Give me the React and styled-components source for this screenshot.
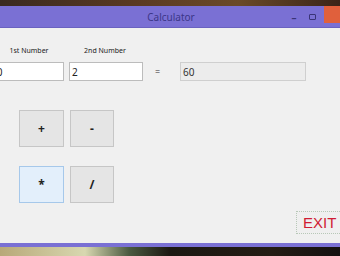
import React from 'react';
import styled, { createGlobalStyle } from 'styled-components';

const Global = createGlobalStyle`
  html, body { margin: 0; padding: 0; background: #1a1410; }
  body { width: 340px; height: 256px; overflow: hidden; font-family: "Noto Sans", "Liberation Sans", sans-serif; }
`;

function App() {
  return (
    <Screen>
      <Global />
      <Desktop />
      <Window>
        <TitleBar>
          <Title>Calculator</Title>
          <Controls>
            <Ctl>–</Ctl>
            <Ctl><RestoreBox /></Ctl>
            <Close />
          </Controls>
        </TitleBar>
        <Body>
          <LabelRow>
            <Label $w={74}>1st Number</Label>
            <Label $w={78}>2nd Number</Label>
          </LabelRow>
          <InputRow>
            <Input $w={76} defaultValue="30" />
            <Input $w={74} defaultValue="2" />
            <Equals>=</Equals>
            <Result>60</Result>
          </InputRow>
          <ButtonGrid>
            <OpButton>+</OpButton>
            <OpButton>-</OpButton>
            <OpButton $focused>*</OpButton>
            <OpButton>/</OpButton>
          </ButtonGrid>
          <Footer>
            <ExitButton>EXIT</ExitButton>
          </Footer>
        </Body>
        <BottomEdge />
      </Window>
      <DesktopBottom />
    </Screen>
  );
}

export default App;

const Screen = styled.div`
  width: 340px;
  height: 256px;
  display: flex;
  flex-direction: column;
  overflow: hidden;
`;

const Desktop = styled.div`
  height: 6px;
  background: linear-gradient(to right, #3a2a20, #5a3a22 40%, #6a4a28 70%, #3a2418);
`;

const DesktopBottom = styled.div`
  flex: 1;
  background: linear-gradient(to right, #b8a878, #d8d8b0 25%, #4a5a40 38%, #1c1812 50%, #241c14 80%, #141010);
`;

const Window = styled.div`
  display: flex;
  flex-direction: column;
`;

const TitleBar = styled.div`
  height: 21px;
  background: #7a70d4;
  border-bottom: 1px solid #6a62c0;
  display: flex;
  align-items: center;
  justify-content: center;
  position: relative;
`;

const Title = styled.div`
  font-size: 10px;
  color: #3c3688;
  margin-left: 2px;
`;

const Controls = styled.div`
  position: absolute;
  right: 0;
  top: 0;
  height: 21px;
  display: flex;
  align-items: center;
`;

const Ctl = styled.div`
  width: 18px;
  display: flex;
  justify-content: center;
  align-items: center;
  font-size: 10px;
  font-weight: bold;
  color: #3a3478;
`;

const RestoreBox = styled.div`
  width: 5px;
  height: 4px;
  border: 1.5px solid #3a3478;
  border-radius: 1px;
`;

const Close = styled.div`
  width: 16px;
  height: 17px;
  margin-left: 3px;
  background: #e0603c;
  align-self: flex-start;
`;

const Body = styled.div`
  height: 215px;
  background: #f0f0f0;
  display: flex;
  flex-direction: column;
`;

const LabelRow = styled.div`
  display: flex;
  padding-top: 18px;
`;

const Label = styled.div`
  width: ${p => p.$w}px;
  text-align: center;
  font-size: 7px;
  color: #222;
  &:first-child { margin-left: -8px; }
`;

const InputRow = styled.div`
  display: flex;
  align-items: center;
  margin-top: 7px;
  margin-left: -12px;
  gap: 5px;
`;

const Input = styled.input`
  width: ${p => p.$w}px;
  height: 19px;
  box-sizing: border-box;
  border: 1px solid #bcbcbc;
  background: #fff;
  font-family: "Noto Sans", "Liberation Sans", sans-serif;
  font-size: 10px;
  color: #222;
  padding: 0 2px;
  outline: none;
`;

const Equals = styled.div`
  width: 27px;
  box-sizing: border-box;
  padding-left: 7px;
  font-size: 9px;
  color: #333;
`;

const Result = styled.div`
  width: 126px;
  height: 19px;
  box-sizing: border-box;
  border: 1px solid #cfcfcf;
  background: #ececec;
  font-size: 10px;
  color: #333;
  padding: 0 2px;
  display: flex;
  align-items: center;
`;

const ButtonGrid = styled.div`
  display: grid;
  grid-template-columns: 45px 44px;
  grid-auto-rows: 37px;
  column-gap: 6px;
  row-gap: 19px;
  margin-top: 29px;
  margin-left: 19px;
`;

const OpButton = styled.button`
  box-sizing: border-box;
  border: 1px solid ${p => (p.$focused ? '#a6c8ea' : '#c6c6c6')};
  background: ${p => (p.$focused ? '#e3effb' : '#e5e5e5')};
  font-family: "Noto Sans", "Liberation Sans", sans-serif;
  font-size: 12px;
  font-weight: bold;
  color: #222;
  padding: 0;
`;

const Footer = styled.div`
  display: flex;
  justify-content: flex-end;
  margin-top: 8px;
  margin-right: -8px;
`;

const ExitButton = styled.button`
  width: 52px;
  height: 23px;
  box-sizing: border-box;
  border: 1px dotted #b8c8b8;
  background: #efefef;
  font-family: "Liberation Sans", sans-serif;
  font-size: 15px;
  color: #d01c34;
  text-align: left;
  padding: 0 0 0 6px;
`;

const BottomEdge = styled.div`
  height: 4px;
  background: #7a70d4;
`;
